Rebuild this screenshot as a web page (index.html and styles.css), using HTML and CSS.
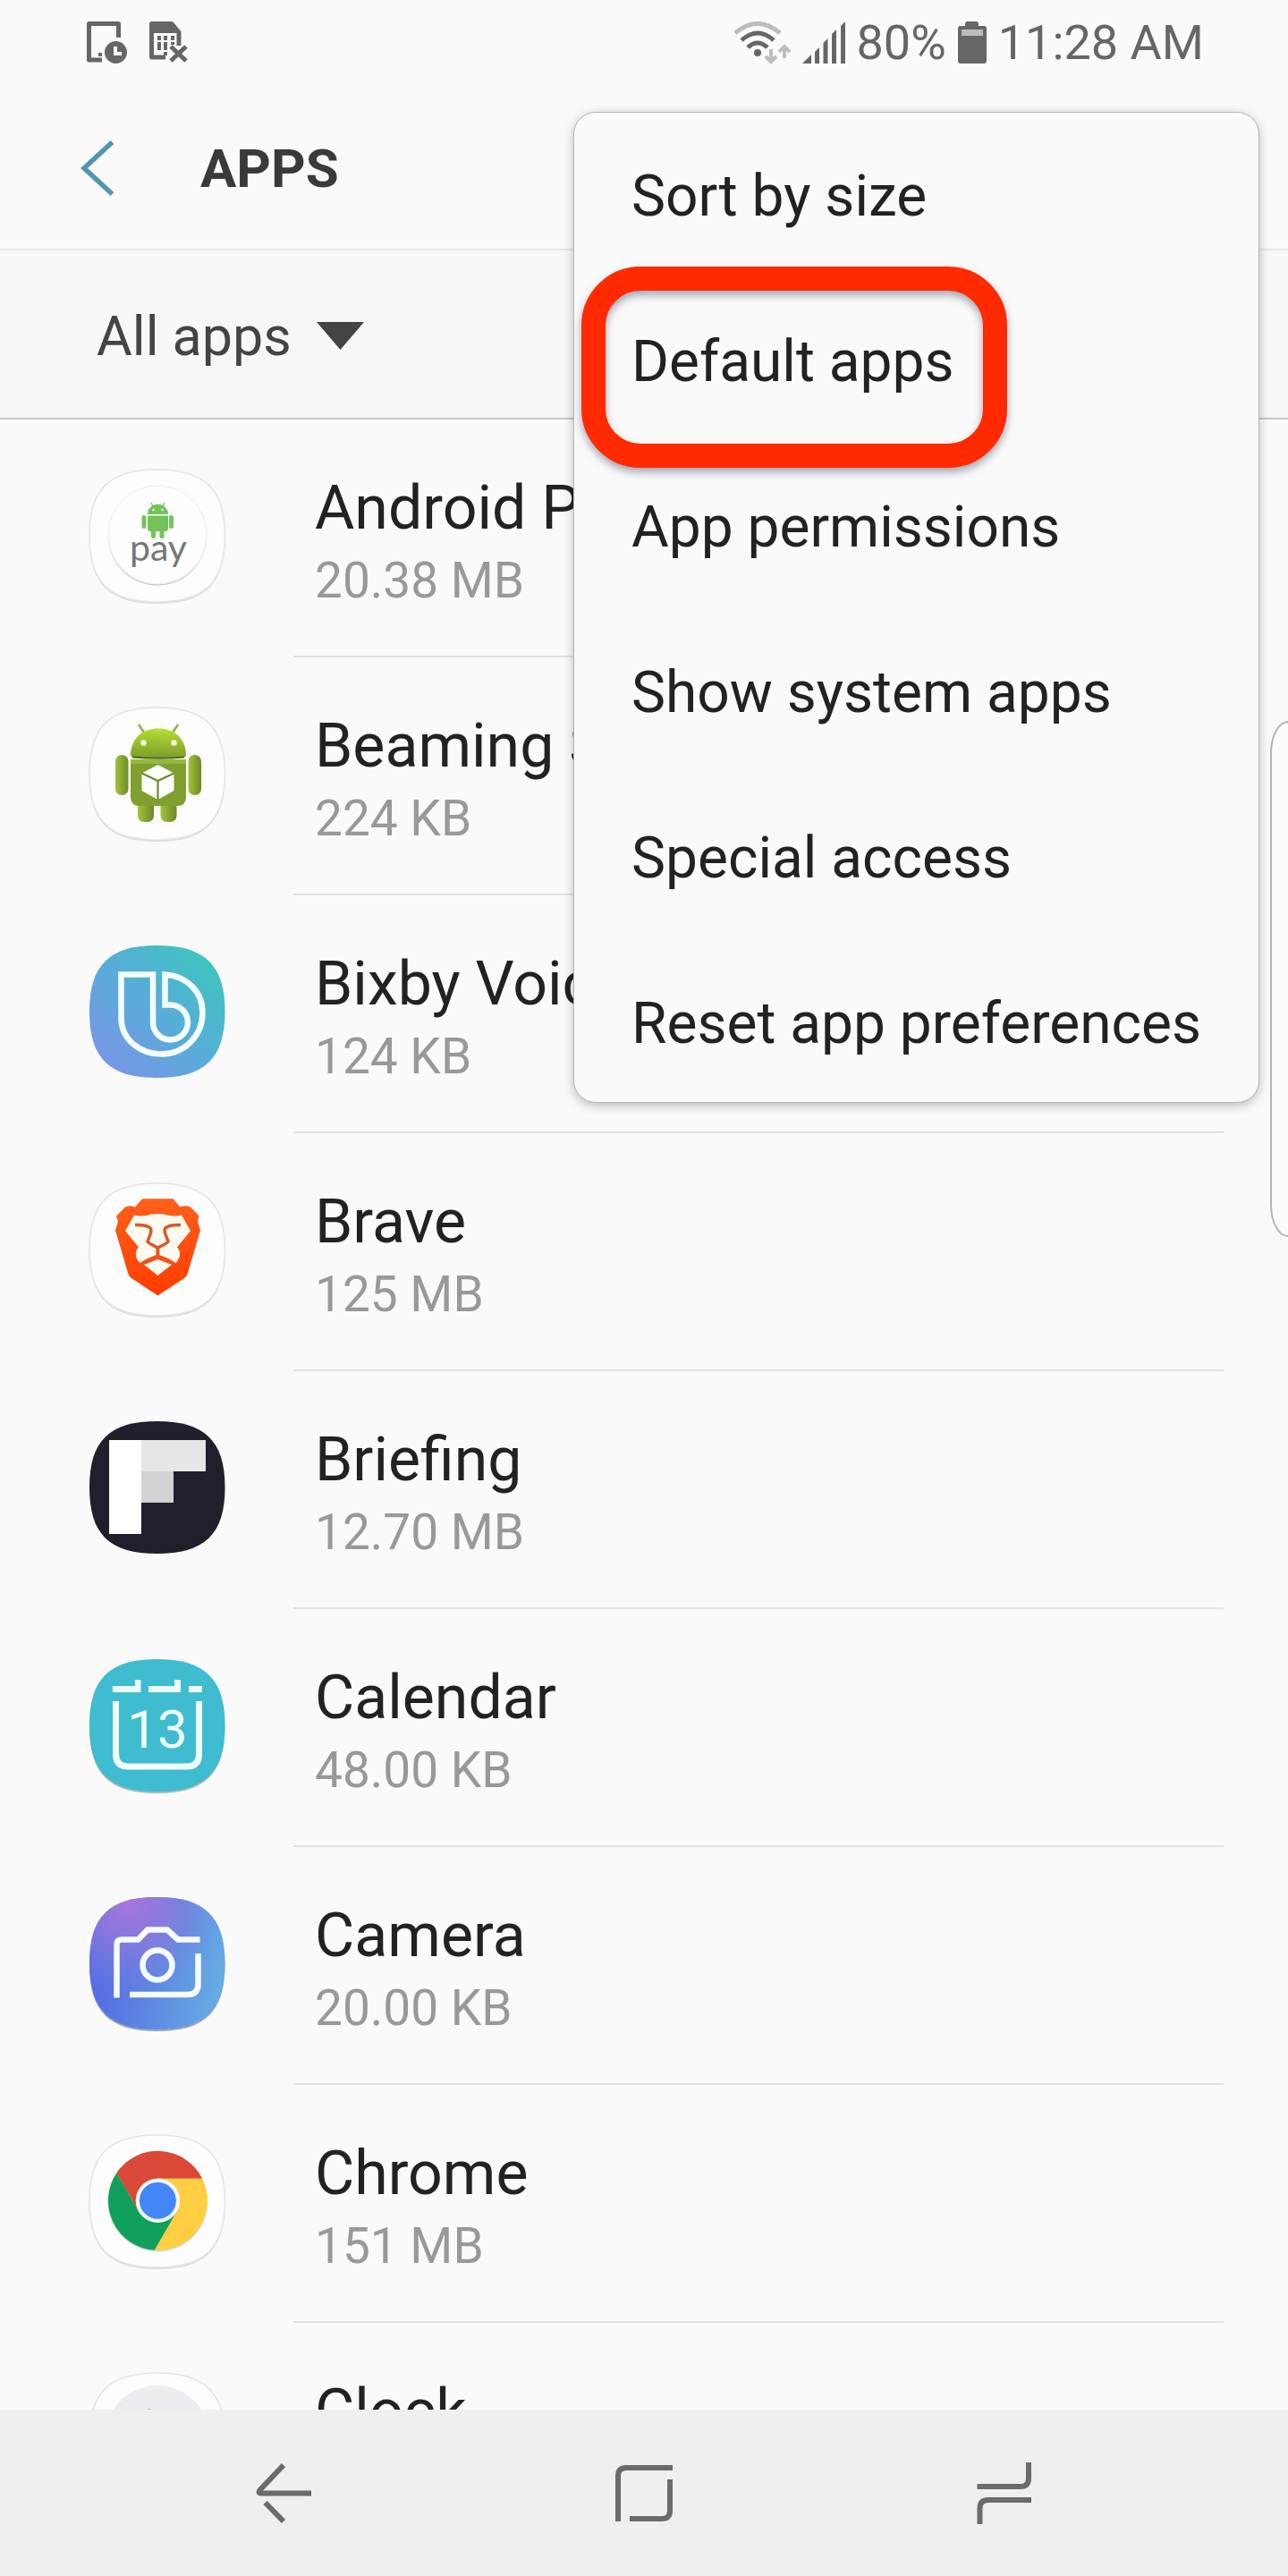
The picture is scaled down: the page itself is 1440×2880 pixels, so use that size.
FILE: index.html
```html
<!DOCTYPE html>
<html lang="en">
<head>
  <meta charset="UTF-8" />
  <meta name="viewport" content="width=device-width, initial-scale=1.0" />
  <title>Apps</title>
  <link rel="stylesheet" href="styles.css">
</head>
<body>
  <!-- Shared icon shapes -->
  <svg class="defs" width="0" height="0" aria-hidden="true">
    <defs>
      <path id="squircle" d="M2 77C2 24 25 3 77.500 3S153.500 24 153.500 77 130 151 77.500 151 2 130 2 77Z" />
      <g id="tile">
        <use href="#squircle" y="2" fill="#dcdcdc" />
        <use href="#squircle" fill="#fdfdfd" stroke="#e4e4e4" stroke-width="1.500" />
      </g>
      <linearGradient id="bixby" x1="0" y1="1" x2="1" y2="0">
        <stop offset="0.1" stop-color="#7896e6" />
        <stop offset="0.5" stop-color="#58acd8" />
        <stop offset="0.9" stop-color="#3ec4c0" />
      </linearGradient>
      <linearGradient id="robot" x1="0" y1="0" x2="0" y2="1">
        <stop offset="0" stop-color="#b4de34" />
        <stop offset="1" stop-color="#7d9c2c" />
      </linearGradient>
      <linearGradient id="limb" x1="0" y1="0" x2="1" y2="0">
        <stop offset="0" stop-color="#a3c23c" />
        <stop offset="1" stop-color="#6c8a26" />
      </linearGradient>
      <linearGradient id="lion" x1="0" y1="0" x2="0" y2="1">
        <stop offset="0" stop-color="#ff601c" />
        <stop offset="1" stop-color="#ff3c00" />
      </linearGradient>
      <linearGradient id="camera" x1="0" y1="0.400" x2="1" y2="0.600">
        <stop offset="0" stop-color="#5866e6" />
        <stop offset="0.300" stop-color="#5a78e2" />
        <stop offset="1" stop-color="#66ade4" />
      </linearGradient>
      <radialGradient id="cameraGlow" cx="0.300" cy="0.050" r="0.700">
        <stop offset="0" stop-color="#a676dc" />
        <stop offset="0.400" stop-color="#9078dc" stop-opacity="0.850" />
        <stop offset="1" stop-color="#7088e0" stop-opacity="0" />
      </radialGradient>
    </defs>
  </svg>

  <div class="screen">
    <div class="status-bar">
      <div class="status-group status-left">
        <svg width="46" height="48" viewBox="0 0 46 48" aria-hidden="true">
          <path d="M17 43H2.500V2.500H35.500V18" fill="none" stroke="#666" stroke-width="5" stroke-linejoin="round" />
          <rect x="13" y="35" width="4" height="4" fill="#666" />
          <circle cx="32.500" cy="34.500" r="12.500" fill="#666" />
          <path d="M32 28V36H39" fill="none" stroke="#fafafa" stroke-width="4" />
        </svg>
        <svg width="43" height="48" viewBox="0 0 43 48" aria-hidden="true">
          <path d="M18 40H2.500V2.500H25L33 12V27" fill="none" stroke="#666" stroke-width="5" stroke-linejoin="round" />
          <path d="M2 2H25L34 13H2Z" fill="#666" />
          <path d="M11 16V34M18 16V38M26 16V26" fill="none" stroke="#666" stroke-width="4" stroke-dasharray="5 2 9 2" />
          <path d="M24 28L41 44M41 28L24 44" fill="none" stroke="#666" stroke-width="5" />
        </svg>
      </div>
      <div class="status-group">
        <svg width="64" height="48" viewBox="0 0 64 48" aria-hidden="true">
          <g fill="none" stroke="#666" stroke-width="5">
            <path d="M2 13Q27 -8 52 13" stroke="#bdbdbd" />
            <path d="M9 21Q27 5 45 21" />
            <path d="M16 29Q27 19 38 29" />
          </g>
          <circle cx="27" cy="35" r="4" fill="#666" />
          <path d="M42 31V44M36 39L42 45L48 39M57 41V29M51 34L57 28L63 34" fill="none" stroke="#bdbdbd" stroke-width="4" />
        </svg>
        <svg width="48" height="48" viewBox="0 0 48 48" aria-hidden="true">
          <path d="M0 47L10 37V47ZM14 34L19 29V47H14ZM23.500 24L28.500 19V47H23.500ZM33 14L38 9V47H33ZM43 5L48 0V47H43Z" fill="#666" />
        </svg>
        <span>80%</span>
        <svg width="32" height="48" viewBox="0 0 32 48" aria-hidden="true">
          <path d="M8 5V3Q8 0 11 0H20Q23 0 23 3V5H29Q32 5 32 8V44Q32 47 29 47H3Q0 47 0 44V8Q0 5 3 5Z" fill="#666" />
          <rect x="4" y="9" width="24" height="7" fill="#bdbdbd" />
        </svg>
        <span>11:28 AM</span>
      </div>
    </div>

    <header class="header">
      <button class="back" type="button" aria-label="Navigate up">
        <svg width="38" height="62" viewBox="0 0 38 62" aria-hidden="true">
          <path d="M35.500 2L4 31L35.500 60" fill="none" stroke="#5097ae" stroke-width="5.500" />
        </svg>
      </button>
      <h1 class="title">APPS</h1>
    </header>

    <div class="filter">
      <select class="filter-select" aria-label="Filter">
        <option>All apps</option>
      </select>
      <svg width="53" height="31" viewBox="0 0 53 31" aria-hidden="true">
        <path d="M0 0H53L26.500 31Z" fill="#444" />
      </svg>
    </div>

    <main class="app-list">
      <a class="app" href="#">
        <svg class="app-icon" viewBox="0 0 156 156" aria-hidden="true">
          <use href="#tile" />
          <circle cx="78" cy="77.500" r="55" fill="#c6c6c6" />
          <circle cx="78" cy="76" r="55" fill="#fefefe" stroke="#ececec" />
          <g fill="#74c35a">
            <path d="M67 53A11.300 11 0 0 1 90 53Z" />
            <path d="M67 54.500H90V69Q90 72 87 72H70Q67 72 67 69Z" />
            <rect x="60.500" y="54" width="5" height="15" rx="2.500" />
            <rect x="91" y="54" width="5" height="15" rx="2.500" />
            <rect x="71" y="68" width="5" height="12" rx="2.300" />
            <rect x="80.500" y="68" width="5" height="12" rx="2.300" />
          </g>
          <path d="M71 40L73 44M86 40L84 44" stroke="#74c35a" stroke-width="1.200" />
          <circle cx="73.500" cy="48" r="1.200" fill="#fff" />
          <circle cx="83.500" cy="48" r="1.200" fill="#fff" />
          <text class="pay" x="79" y="105" text-anchor="middle">pay</text>
        </svg>
        <span class="app-body">
          <span class="app-name">Android Pay</span>
          <span class="app-size">20.38 MB</span>
        </span>
      </a>

      <a class="app" href="#">
        <svg class="app-icon" viewBox="0 0 156 156" aria-hidden="true">
          <use href="#tile" />
          <path d="M57 22L63 31M101 22L95 31" stroke="#93aa55" stroke-width="2.500" />
          <rect x="56" y="102" width="18" height="29" rx="7" fill="url(#limb)" />
          <rect x="81.500" y="102" width="18" height="29" rx="7" fill="url(#limb)" />
          <rect x="31" y="56" width="14.500" height="45" rx="7" fill="url(#limb)" />
          <rect x="112.500" y="56" width="14.500" height="45" rx="7" fill="url(#limb)" />
          <path d="M48 61H110V103Q110 113 100 113H58Q48 113 48 103Z" fill="#7f9f2f" />
          <path d="M48 61H110V66H48Z" fill="#98b83c" />
          <path d="M48 55C49 37 61 26.500 79 26.500S109 37 110 55Q110 59 106 59H52Q48 59 48 55Z" fill="url(#robot)" />
          <path d="M50 58.500Q79 61 108 58.500" fill="none" stroke="#55691f" stroke-width="2" />
          <circle cx="62.500" cy="42.500" r="3.200" fill="#f4fae0" />
          <circle cx="96.500" cy="42.500" r="3.200" fill="#f4fae0" />
          <path d="M78.500 67L96.500 76.500V96L78.500 106L60.500 96V76.500Z" fill="#fff" />
          <path d="M60.500 76.500L78.500 85L96.500 76.500M78.500 85V106" fill="none" stroke="#6e8a2a" stroke-width="2.200" />
        </svg>
        <span class="app-body">
          <span class="app-name">Beaming Service</span>
          <span class="app-size">224 KB</span>
        </span>
      </a>

      <a class="app" href="#">
        <svg class="app-icon" viewBox="0 0 156 156" aria-hidden="true">
          <use href="#squircle" fill="url(#bixby)" />
          <path d="M37.500 35.500H73V88A19.500 19.500 0 1 0 92.500 69.500H86.500V35.500C110 37 128.500 54 128.500 78C128.500 104 108 124.500 83 124.500S37.500 108 37.500 84Z" fill="none" stroke="#f4ffff" stroke-width="6.500" />
        </svg>
        <span class="app-body">
          <span class="app-name">Bixby Voice</span>
          <span class="app-size">124 KB</span>
        </span>
      </a>

      <a class="app" href="#">
        <svg class="app-icon" viewBox="0 0 156 156" aria-hidden="true">
          <use href="#tile" />
          <path d="M61 20.300H95.500L103.500 29.500Q109 27 115 29.500L124.500 39.500L123 45.500L126 55.500L112 103Q111 107 108 109L78.400 128.500L49 109Q46 107 45 103L31 55.500L34 45.500L32 39.500L42 29.500Q48 27 53 29.500Z" fill="url(#lion)" />
          <path d="M78.400 37Q86 37 91 39Q98 40 105 38.500L115 56L100 74.500Q104 78 103 84Q101 91 97 93L78.400 86L60 93Q55 90 54 84Q53 78 57 74.500L42 56L52 38.500Q59 40 66 39Q71 37 78.400 37Z" fill="#fffaf0" />
          <path d="M53 49.500Q65 49 69.500 52.500Q72 54 70 60L67 68Q68 70 78.400 75Q89 70 90 68L87 60Q85 54 87.500 52.500Q92 49 104 49.500" fill="none" stroke="#d9582a" stroke-width="3.500" />
          <path d="M78.400 75V84M59 94Q68 88 78.400 84.500Q89 88 98 94" fill="none" stroke="#e8561e" stroke-width="4" />
          <path d="M63 94L78.400 88L94 94L78.400 106Z" fill="#fffaf0" />
        </svg>
        <span class="app-body">
          <span class="app-name">Brave</span>
          <span class="app-size">125 MB</span>
        </span>
      </a>

      <a class="app" href="#">
        <svg class="app-icon" viewBox="0 0 156 156" aria-hidden="true">
          <use href="#squircle" fill="#20202c" />
          <rect x="24" y="24" width="36" height="105" fill="#fff" />
          <rect x="60" y="24" width="72" height="35" fill="#e6e6e6" />
          <rect x="60" y="59" width="36" height="35" fill="#d2d2d3" />
        </svg>
        <span class="app-body">
          <span class="app-name">Briefing</span>
          <span class="app-size">12.70 MB</span>
        </span>
      </a>

      <a class="app" href="#">
        <svg class="app-icon" viewBox="0 0 156 156" aria-hidden="true">
          <use href="#squircle" y="2" fill="#9fb9bd" />
          <use href="#squircle" fill="#3fbccf" />
          <path d="M28 33H53V26H59.500V40H28ZM68 33H97V26H104V40H68ZM113 33H128V40H113Z" fill="#effdff" />
          <path d="M31.500 50V109Q31.500 123 45 123H111Q124.500 123 124.500 109V50" fill="none" stroke="#effdff" stroke-width="7" />
          <text class="day" x="78" y="102" text-anchor="middle">13</text>
        </svg>
        <span class="app-body">
          <span class="app-name">Calendar</span>
          <span class="app-size">48.00 KB</span>
        </span>
      </a>

      <a class="app" href="#">
        <svg class="app-icon" viewBox="0 0 156 156" aria-hidden="true">
          <use href="#squircle" y="2" fill="#9aa4c4" />
          <use href="#squircle" fill="url(#camera)" />
          <use href="#squircle" fill="url(#cameraGlow)" />
          <g fill="none" stroke="#f6fbff" stroke-width="6.500">
            <path d="M32.500 115.500V56Q32.500 50.500 38 50.500H56.500L67 39.500H89L101 50.500H125.500" />
            <path d="M123.500 66V100Q123.500 112 112 112H47" />
            <circle cx="78" cy="79" r="16.500" />
          </g>
        </svg>
        <span class="app-body">
          <span class="app-name">Camera</span>
          <span class="app-size">20.00 KB</span>
        </span>
      </a>

      <a class="app" href="#">
        <svg class="app-icon" viewBox="0 0 156 156" aria-hidden="true">
          <use href="#tile" />
          <circle cx="78.400" cy="77.800" r="55.500" fill="#d5d5d5" />
          <path d="M32.300 45.400A55.500 55.500 0 0 1 128.200 51.800H78.400L57.200 88.500Z" fill="#da4838" />
          <path d="M128.200 51.800A55.500 55.500 0 0 1 74.700 131.700L99.600 88.500L78.400 51.800Z" fill="#ffce42" />
          <path d="M74.700 131.700A55.500 55.500 0 0 1 32.300 45.400L57.200 88.500H99.600Z" fill="#11a05c" />
          <circle cx="78.400" cy="76.300" r="24.700" fill="#f2f6ff" />
          <circle cx="78.400" cy="76.300" r="20.500" fill="#4386f5" />
        </svg>
        <span class="app-body">
          <span class="app-name">Chrome</span>
          <span class="app-size">151 MB</span>
        </span>
      </a>

      <a class="app" href="#">
        <svg class="app-icon" viewBox="0 0 156 156" aria-hidden="true">
          <use href="#tile" />
          <circle cx="78" cy="75" r="58" fill="#ecedf1" />
          <path d="M69 46L78 76" stroke="#555" stroke-width="5" stroke-linecap="round" />
        </svg>
        <span class="app-body">
          <span class="app-name">Clock</span>
        </span>
      </a>
    </main>

    <nav class="nav-bar">
      <button class="nav-button" type="button" aria-label="Back">
        <svg width="70" height="70" viewBox="0 0 70 70" aria-hidden="true">
          <path d="M35 4L8.500 32Q6 35.500 10 35.500H66M14.500 46L35 67" fill="none" stroke="#6b6b6b" stroke-width="6" />
        </svg>
      </button>
      <button class="nav-button" type="button" aria-label="Home">
        <svg width="70" height="70" viewBox="0 0 70 70" aria-hidden="true">
          <path d="M6 67V16Q6 7 15 7H67M64 20V55Q64 64 55 64H19" fill="none" stroke="#6b6b6b" stroke-width="6" />
        </svg>
      </button>
      <button class="nav-button" type="button" aria-label="Recents">
        <svg width="70" height="70" viewBox="0 0 70 70" aria-hidden="true">
          <path d="M4.500 28H53Q62 28 62 19V1M7.500 70V52Q7.500 43 17 43H65" fill="none" stroke="#6b6b6b" stroke-width="6" />
        </svg>
      </button>
    </nav>

    <div class="edge-handle"></div>

    <div class="menu">
      <button class="menu-item" type="button">Sort by size</button>
      <button class="menu-item highlighted" type="button">Default apps</button>
      <button class="menu-item" type="button">App permissions</button>
      <button class="menu-item" type="button">Show system apps</button>
      <button class="menu-item" type="button">Special access</button>
      <button class="menu-item" type="button">Reset app preferences</button>
    </div>
  </div>
</body>
</html>
```

FILE: styles.css
```css
* {
  margin: 0;
  padding: 0;
  box-sizing: border-box;
}

body {
  font-family: Roboto, "Liberation Sans", sans-serif;
  background: #fafafa;
  color: #222;
}

button,
select {
  font-family: inherit;
  color: inherit;
  background: none;
  border: none;
  cursor: pointer;
}

svg {
  display: block;
  flex-shrink: 0;
}

.defs {
  position: absolute;
}

.screen {
  position: relative;
  display: flex;
  flex-direction: column;
  height: 100vh;
  overflow: hidden;
}

/* Status bar */
.status-bar {
  display: flex;
  flex-shrink: 0;
  justify-content: space-between;
  align-items: center;
  height: 96px;
  padding: 0 94px 0 97px;
  color: #666;
  font-size: 54px;
  line-height: 64px;
}

.status-group {
  display: flex;
  align-items: center;
  gap: 13px;
}

.status-left {
  gap: 24px;
}

/* Header */
.header {
  display: flex;
  flex-shrink: 0;
  align-items: center;
  gap: 96px;
  height: 184px;
  padding: 2px 90px 0;
  border-bottom: 2px solid #e6e6e6;
}

.title {
  font-size: 60px;
  font-weight: 700;
  color: #3a3a3a;
}

.filter {
  display: flex;
  flex-shrink: 0;
  align-items: center;
  gap: 28px;
  height: 189px;
  padding: 4px 108px 0;
  background: #f7f7f7;
  border-bottom: 2px solid #c8c8c8;
}

.filter-select {
  appearance: none;
  font-size: 61px;
  color: #444;
}

/* App list */
.app-list {
  flex: 1;
  min-height: 0;
  overflow: hidden;
}

.app {
  display: flex;
  align-items: flex-start;
  gap: 74px;
  padding: 0 72px 0 98px;
  color: inherit;
  text-decoration: none;
}

.app-icon {
  width: 156px;
  height: 156px;
  margin-top: 53px;
}

.app-body {
  display: flex;
  flex: 1;
  flex-direction: column;
  padding: 57px 0 45px 24px;
  border-bottom: 2px solid #e2e2e2;
}

.app-name {
  font-size: 68px;
  line-height: 84px;
}

.app-size {
  font-size: 55px;
  line-height: 78px;
  color: #999;
}

.pay {
  font-family: Lato, sans-serif;
  font-size: 41px;
  fill: #777;
}

.day {
  font-size: 60px;
  fill: #effdff;
}

/* Navigation bar */
.nav-bar {
  display: flex;
  flex-shrink: 0;
  justify-content: center;
  height: 186px;
  background: #efefef;
}

.nav-button {
  display: flex;
  align-items: center;
  justify-content: center;
  width: 28%;
}

/* Edge panel handle */
.edge-handle {
  position: absolute;
  top: 806px;
  right: 0;
  width: 20px;
  height: 577px;
  background: #fcfcfc;
  border: 2px solid #b4b4b4;
  border-right: none;
  border-radius: 20px 0 0 20px / 36px 0 0 36px;
}

/* Overflow menu */
.menu {
  position: absolute;
  top: 125px;
  right: 32px;
  display: flex;
  flex-direction: column;
  align-items: flex-start;
  gap: 110px;
  padding: 56px 64px 50px;
  background: #fafafa;
  border: 1px solid #b4b4b4;
  border-radius: 25px;
  box-shadow: 0 3px 12px rgba(0, 0, 0, 0.25);
}

.menu-item {
  position: relative;
  font-size: 64px;
  line-height: 75px;
  white-space: nowrap;
}

.highlighted::after {
  content: "";
  position: absolute;
  inset: -69px -60px -81px -56px;
  border: 27px solid #ff2a00;
  border-radius: 66px;
  filter: drop-shadow(0 5px 5px rgba(0, 0, 40, 0.35));
}
```
